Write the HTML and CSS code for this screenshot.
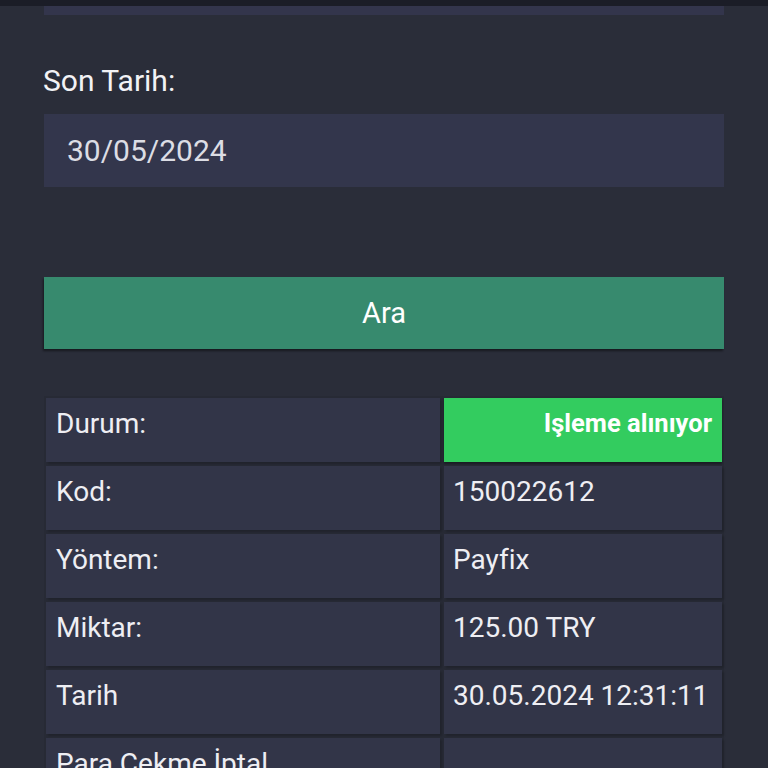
FILE: index.html
```html
<!DOCTYPE html>
<html lang="tr">
<head>
<meta charset="utf-8">
<title>Para Çekme</title>
<link rel="stylesheet" href="styles.css">
</head>
<body>
<div class="topbar"></div>
<main class="page">
  <div class="field-stub"></div>
  <label class="label">Son Tarih:</label>
  <div class="input">30/05/2024</div>
  <button class="btn">Ara</button>
  <div class="table">
    <div class="cell key">Durum:</div>
    <div class="cell val status">Işleme alınıyor</div>
    <div class="cell key">Kod:</div>
    <div class="cell val">150022612</div>
    <div class="cell key">Yöntem:</div>
    <div class="cell val">Payfix</div>
    <div class="cell key">Miktar:</div>
    <div class="cell val">125.00 TRY</div>
    <div class="cell key">Tarih</div>
    <div class="cell val">30.05.2024 12:31:11</div>
    <div class="cell key">Para Çekme İptal</div>
    <div class="cell val"></div>
  </div>
</main>
</body>
</html>
```
FILE: styles.css
```css
html, body {
  margin: 0;
  padding: 0;
  background: #2a2d39;
  font-family: Roboto, "Noto Sans", Arial, sans-serif;
  color: #eeeef2;
  overflow: hidden;
}

.topbar {
  height: 6px;
  background: #1b1d27;
}

.page {
  width: 680px;
  margin: 0 44px;
  display: flex;
  flex-direction: column;
}

.field-stub {
  height: 9px;
  background: #33354c;
}

.label {
  margin-top: 48px;
  margin-left: -1px;
  font-size: 30px;
  line-height: 35px;
  color: #f2f2f5;
}

.input {
  margin-top: 16px;
  height: 73px;
  box-sizing: border-box;
  background: #33364c;
  padding: 0 23px;
  display: flex;
  align-items: center;
  font-size: 30px;
  color: #dcdde4;
}

.btn {
  margin-top: 90px;
  height: 72px;
  border: 0;
  padding: 0;
  background: #378a6e;
  color: #ffffff;
  font-family: inherit;
  font-size: 29px;
  box-shadow: -1px 2px 2px rgba(0, 0, 0, 0.45);
}

.table {
  margin-top: 47px;
  padding: 2px;
  background: #272a35;
  display: grid;
  grid-template-columns: 394px 1fr;
  grid-auto-rows: 64px;
  gap: 4px;
}

.cell {
  background: #323548;
  box-sizing: border-box;
  padding: 9px 9px 0;
  font-size: 28px;
  line-height: 33px;
  color: #eeeef3;
  box-shadow: 2px 2px 2px rgba(0, 0, 0, 0.18);
  white-space: nowrap;
}

.key {
  padding-left: 10px;
}

.status {
  background: #33cc5f;
  color: #ffffff;
  font-weight: 700;
  font-size: 25.5px;
  text-align: right;
  padding: 9px 10px 0;
  box-shadow: 0 2px 2px rgba(0, 0, 0, 0.35);
}
```
